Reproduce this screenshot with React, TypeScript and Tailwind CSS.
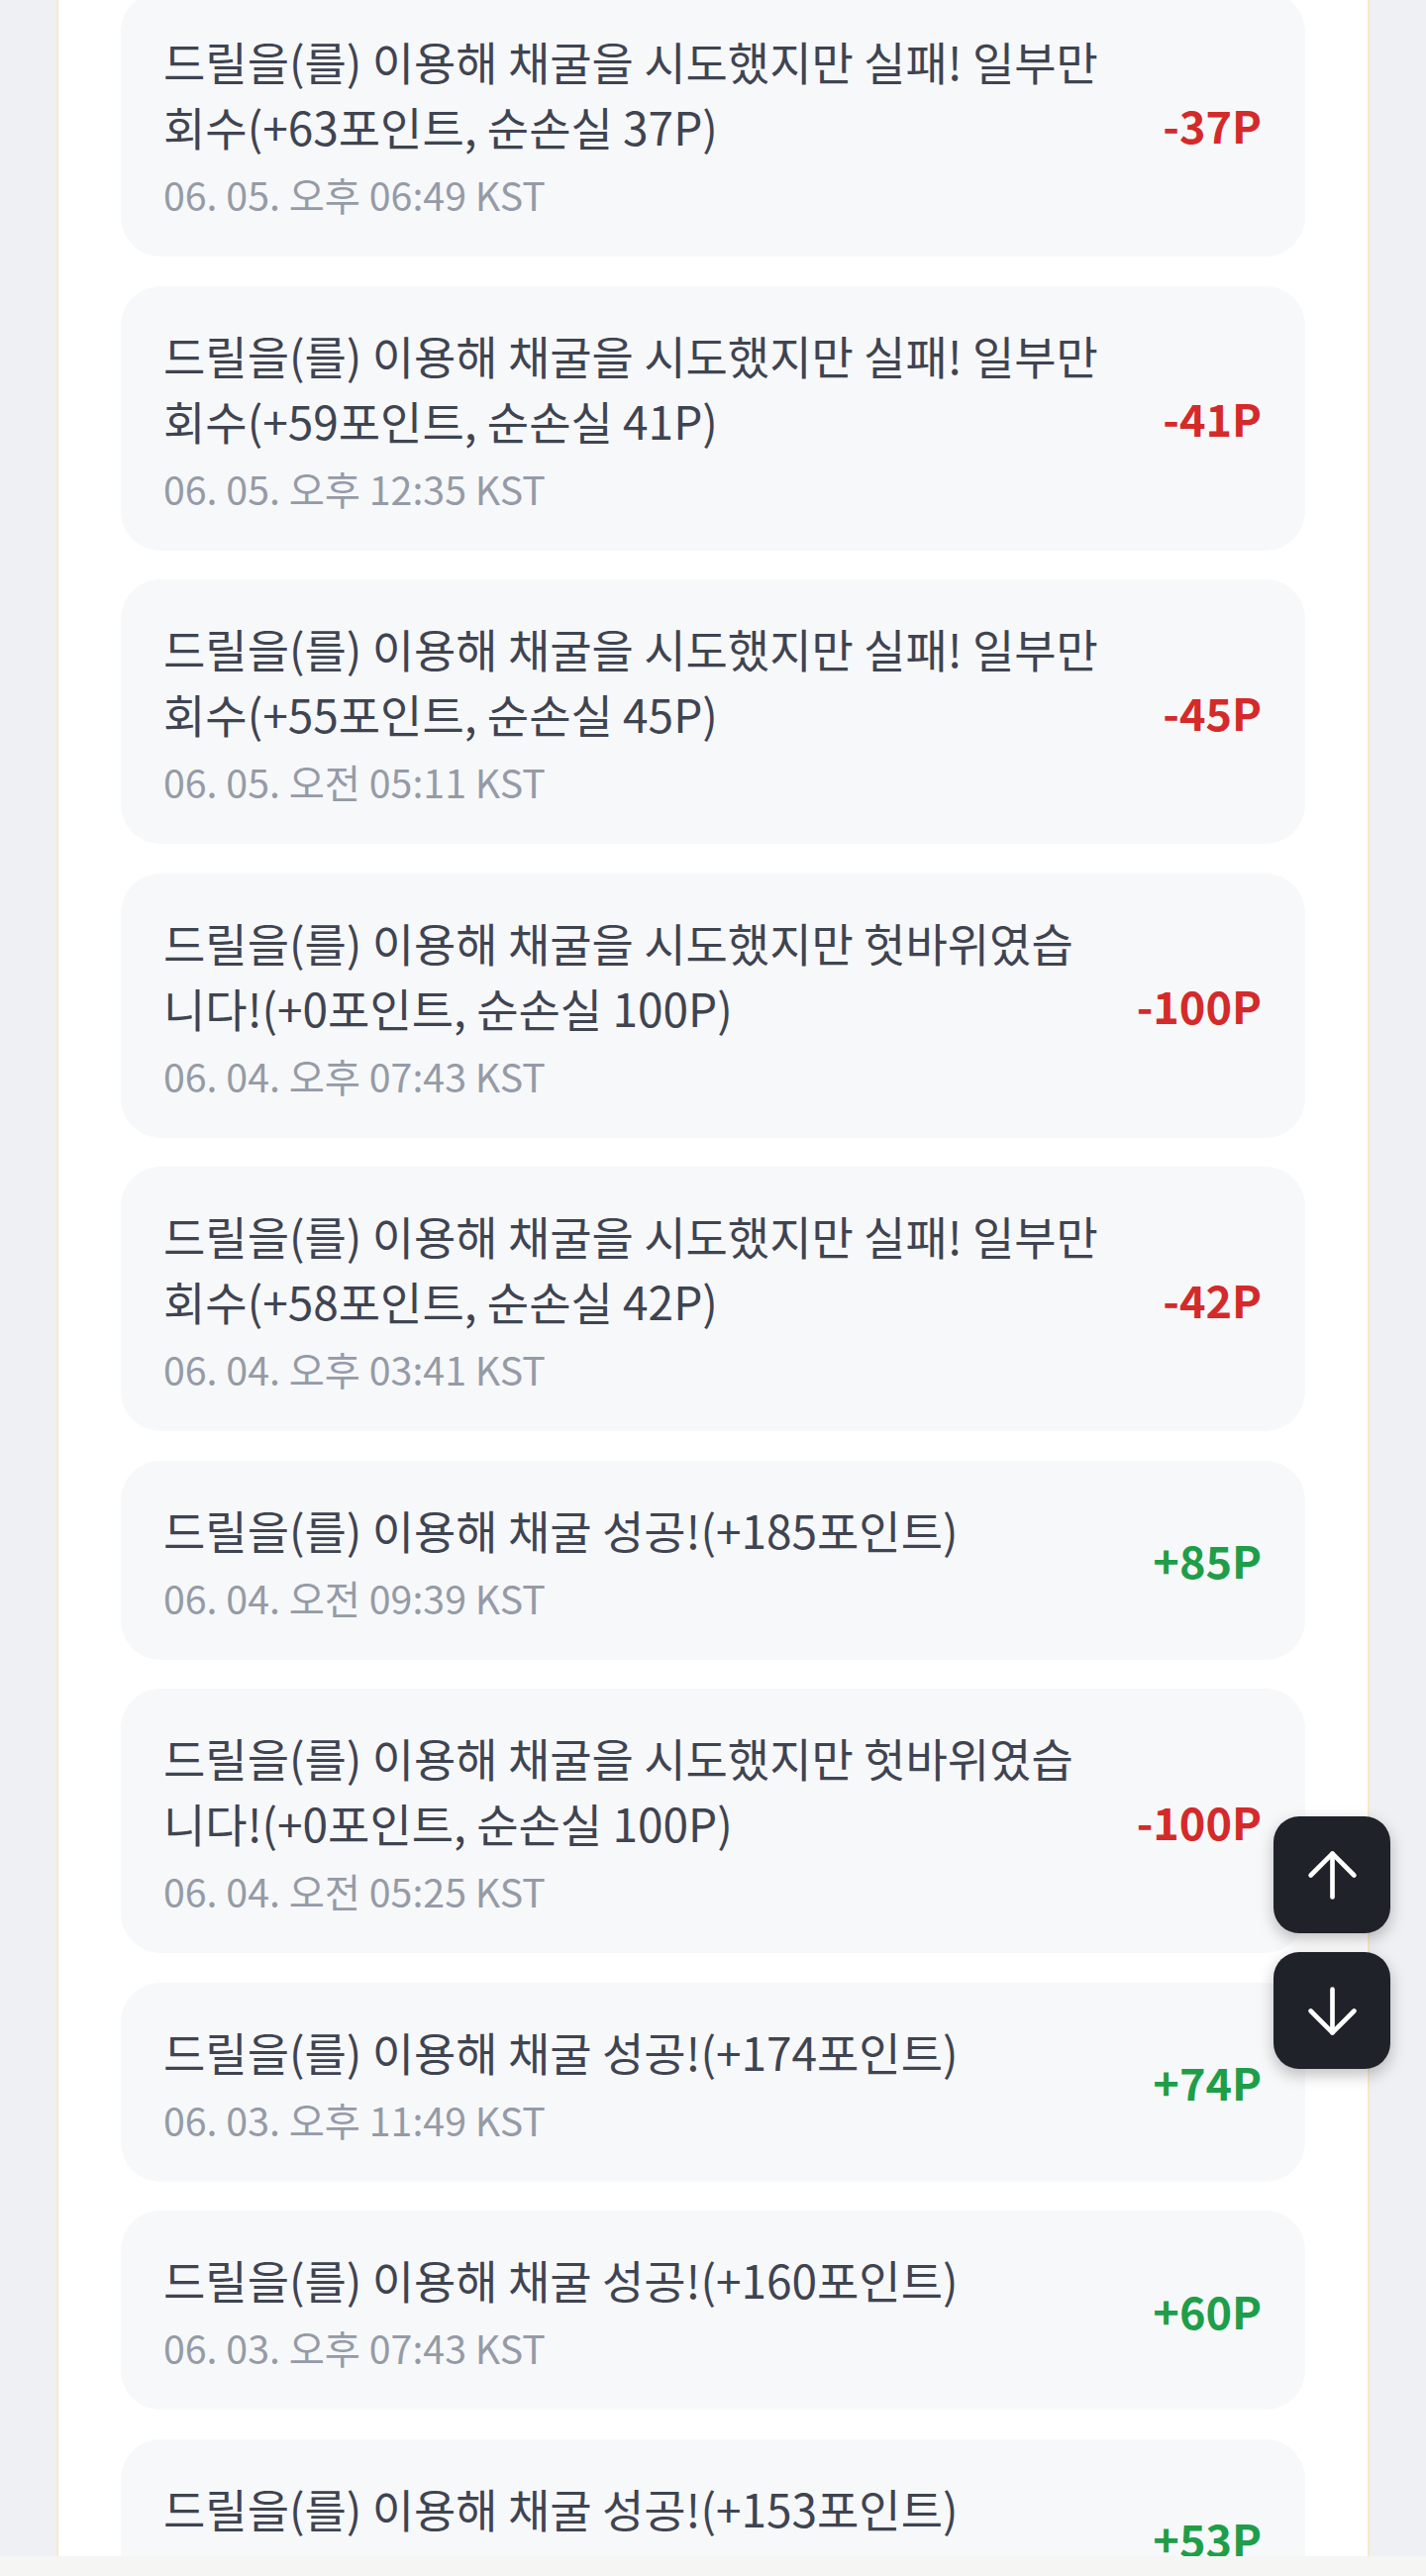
import React from "react";

type Item = { text: string; time: string; amount: string; positive: boolean };

const items: Item[] = [
  { text: "드릴을(를) 이용해 채굴을 시도했지만 실패! 일부만 회수(+63포인트, 순손실 37P)", time: "06. 05. 오후 06:49 KST", amount: "-37P", positive: false },
  { text: "드릴을(를) 이용해 채굴을 시도했지만 실패! 일부만 회수(+59포인트, 순손실 41P)", time: "06. 05. 오후 12:35 KST", amount: "-41P", positive: false },
  { text: "드릴을(를) 이용해 채굴을 시도했지만 실패! 일부만 회수(+55포인트, 순손실 45P)", time: "06. 05. 오전 05:11 KST", amount: "-45P", positive: false },
  { text: "드릴을(를) 이용해 채굴을 시도했지만 헛바위였습니다!(+0포인트, 순손실 100P)", time: "06. 04. 오후 07:43 KST", amount: "-100P", positive: false },
  { text: "드릴을(를) 이용해 채굴을 시도했지만 실패! 일부만 회수(+58포인트, 순손실 42P)", time: "06. 04. 오후 03:41 KST", amount: "-42P", positive: false },
  { text: "드릴을(를) 이용해 채굴 성공!(+185포인트)", time: "06. 04. 오전 09:39 KST", amount: "+85P", positive: true },
  { text: "드릴을(를) 이용해 채굴을 시도했지만 헛바위였습니다!(+0포인트, 순손실 100P)", time: "06. 04. 오전 05:25 KST", amount: "-100P", positive: false },
  { text: "드릴을(를) 이용해 채굴 성공!(+174포인트)", time: "06. 03. 오후 11:49 KST", amount: "+74P", positive: true },
  { text: "드릴을(를) 이용해 채굴 성공!(+160포인트)", time: "06. 03. 오후 07:43 KST", amount: "+60P", positive: true },
  { text: "드릴을(를) 이용해 채굴 성공!(+153포인트)", time: "06. 03. 오후 05:21 KST", amount: "+53P", positive: true },
];

function Arrow({ up }: { up: boolean }) {
  return (
    <svg width="75" height="75" viewBox="0 0 24 24" fill="none" stroke="white" strokeWidth="1.5" strokeLinecap="round" strokeLinejoin="round">
      {up ? (
        <>
          <path d="m5 12 7-7 7 7" />
          <path d="M12 19V5" />
        </>
      ) : (
        <>
          <path d="M12 5v14" />
          <path d="m19 12-7 7-7-7" />
        </>
      )}
    </svg>
  );
}

export default function App() {
  return (
    <div className="relative h-[2601px] overflow-hidden bg-[#eef0f3] font-['Noto_Sans_CJK_KR','Noto_Sans',sans-serif]">
      <div className="mx-[57px] h-full border-x-[2px] border-[#f8e9cb] bg-white px-[63px]">
        <div className="mt-[-8px] flex flex-col gap-[29.5px]">
          {items.map((it, i) => (
            <div key={i} className="flex items-center justify-between gap-[42px] rounded-[40px] bg-[#f7f8fa] pb-[37px] pl-[43px] pr-[44px] pt-[36px]">
              <div className="min-w-0 flex-1">
                <p className="text-[46px] leading-[66px] text-[#3f4451]">{it.text}</p>
                <p className="mt-[10px] text-[39.3px] leading-[52px] text-[#959ba6]">{it.time}</p>
              </div>
              <div className={`shrink-0 text-[45px] font-bold leading-[63px] ${it.positive ? "text-[#1e9e48]" : "text-[#d42a2a]"}`}>
                {it.amount}
              </div>
            </div>
          ))}
        </div>
      </div>
      <div className="absolute bottom-[512px] right-[36px] flex flex-col gap-[19px]">
        <button className="flex h-[118px] w-[118px] items-center justify-center rounded-[26px] bg-[#1f2229] shadow-[0_6px_16px_rgba(0,0,0,0.25)]">
          <Arrow up />
        </button>
        <button className="flex h-[118px] w-[118px] items-center justify-center rounded-[26px] bg-[#1f2229] shadow-[0_6px_16px_rgba(0,0,0,0.25)]">
          <Arrow up={false} />
        </button>
      </div>
      <div className="absolute bottom-0 left-0 right-0 h-[20px] bg-[#f5f5f4]" />
    </div>
  );
}
